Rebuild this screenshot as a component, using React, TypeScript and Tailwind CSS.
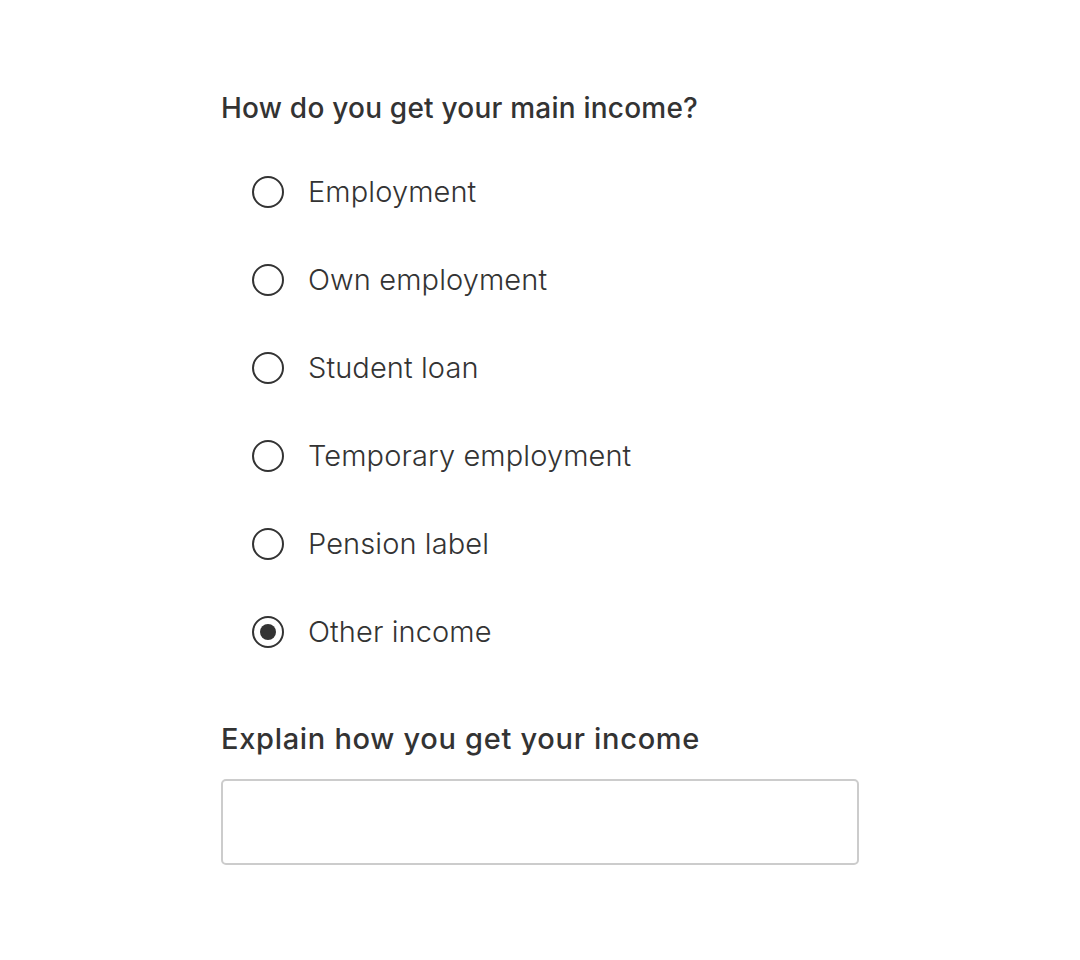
import { useState } from "react";

const options = [
  "Employment",
  "Own employment",
  "Student loan",
  "Temporary employment",
  "Pension label",
  "Other income",
];

export default function App() {
  const [selected, setSelected] = useState("Other income");

  return (
    <main
      className="min-h-screen bg-white pl-[221px] pt-[88px] text-[#333]"
      style={{ fontFamily: "Inter, 'Noto Sans', sans-serif" }}
    >
      <fieldset>
        <legend className="text-[28px] leading-[40px] font-medium tracking-[0.22px]">
          How do you get your main income?
        </legend>

        <div className="mt-[20px] pl-[31px] flex flex-col">
          {options.map((opt) => (
            <label
              key={opt}
              className="h-[88px] flex items-center gap-[24px] cursor-pointer"
              onClick={() => setSelected(opt)}
            >
              <span className="w-8 h-8 rounded-full border-2 border-[#333] flex items-center justify-center">
                {selected === opt && (
                  <span className="w-4 h-4 rounded-full bg-[#333]" />
                )}
              </span>
              <span className="text-[29px] leading-[40px] font-light tracking-[0.1px]">
                {opt}
              </span>
            </label>
          ))}
        </div>
      </fieldset>

      <div className="mt-[43px]">
        <label className="block text-[29px] leading-[40px] font-medium tracking-[0.7px]">
          Explain how you get your income
        </label>
        <input
          type="text"
          className="mt-[20px] w-[638px] h-[86px] rounded-[5px] border-2 border-[#ccc] outline-none px-4"
        />
      </div>
    </main>
  );
}
